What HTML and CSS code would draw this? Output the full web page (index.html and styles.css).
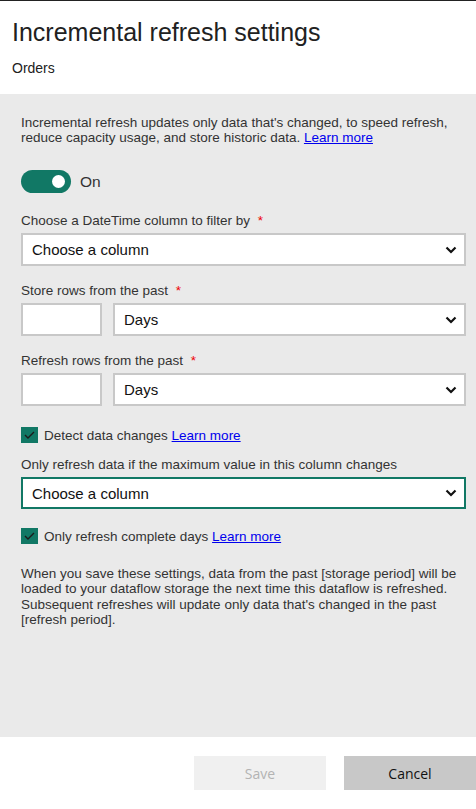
FILE: index.html
```html
<!DOCTYPE html>
<html>
<head>
	<meta charset="utf-8">
	<title>Incremental refresh settings</title>
	<link rel="stylesheet" href="styles.css">
</head>
<body>

<div class="dialog">
	<div class="header">
		<h1>Incremental refresh settings</h1>
		<p class="entity">Orders</p>
	</div>

	<div class="panel">
		<p class="desc">Incremental refresh updates only data that's changed, to speed refresh, reduce capacity usage, and store historic data. <a href="#">Learn more</a></p>

		<div class="toggle-row">
			<span class="toggle"><span class="knob"></span></span>
			<span class="toggle-label">On</span>
		</div>

		<label class="field-label first">Choose a DateTime column to filter by <span class="req">*</span></label>
		<div class="dropdown">
			<span>Choose a column</span>
			<svg class="chev" width="12" height="8" viewBox="0 0 12 8"><polyline points="1.5,1.5 6,6 10.5,1.5" fill="none" stroke="#111" stroke-width="2.2"/></svg>
		</div>

		<label class="field-label">Store rows from the past <span class="req">*</span></label>
		<div class="pair">
			<div class="num"></div>
			<div class="dropdown">
				<span>Days</span>
				<svg class="chev" width="12" height="8" viewBox="0 0 12 8"><polyline points="1.5,1.5 6,6 10.5,1.5" fill="none" stroke="#111" stroke-width="2.2"/></svg>
			</div>
		</div>

		<label class="field-label">Refresh rows from the past <span class="req">*</span></label>
		<div class="pair">
			<div class="num"></div>
			<div class="dropdown">
				<span>Days</span>
				<svg class="chev" width="12" height="8" viewBox="0 0 12 8"><polyline points="1.5,1.5 6,6 10.5,1.5" fill="none" stroke="#111" stroke-width="2.2"/></svg>
			</div>
		</div>

		<div class="check-row first">
			<span class="check"><svg width="17" height="16" viewBox="0 0 17 16"><polyline points="4,8 7,11 13,5" fill="none" stroke="#1b1b1b" stroke-width="1.4"/></svg></span>
			<span>Detect data changes <a href="#">Learn more</a></span>
		</div>

		<label class="field-label">Only refresh data if the maximum value in this column changes</label>
		<div class="dropdown focus">
			<span>Choose a column</span>
			<svg class="chev" width="12" height="8" viewBox="0 0 12 8"><polyline points="1.5,1.5 6,6 10.5,1.5" fill="none" stroke="#111" stroke-width="2.2"/></svg>
		</div>

		<div class="check-row">
			<span class="check"><svg width="17" height="16" viewBox="0 0 17 16"><polyline points="4,8 7,11 13,5" fill="none" stroke="#1b1b1b" stroke-width="1.4"/></svg></span>
			<span>Only refresh complete days <a href="#">Learn more</a></span>
		</div>

		<p class="note">When you save these settings, data from the past [storage period] will be loaded to your dataflow storage the next time this dataflow is refreshed. Subsequent refreshes will update only data that's changed in the past [refresh period].</p>
	</div>

	<div class="footer">
		<button class="btn save" disabled>Save</button>
		<button class="btn cancel">Cancel</button>
	</div>
</div>

</body>
</html>
```

FILE: styles.css
```css
body {
	margin: 0;
	background: white;
	font-family: "Liberation Sans", Arial, sans-serif;
	color: #333;
}
.dialog {
	width: 476px;
	height: 809px;
	display: flex;
	flex-direction: column;
	border-top: 1px solid #222;
	box-sizing: border-box;
}

.header {
	height: 93px;
	flex: none;
	padding: 0 12px;
	box-sizing: border-box;
}
.header h1 {
	margin: 0;
	padding-top: 17px;
	font-size: 25px;
	font-weight: normal;
	color: #212121;
	line-height: 28px;
}
.entity {
	margin: 14px 0 0 0;
	font-size: 14px;
	color: #212121;
}

.panel {
	height: 643px;
	flex: none;
	background: #eaeaea;
	padding: 0 10px 0 21px;
	box-sizing: border-box;
	display: flex;
	flex-direction: column;
	font-size: 13.5px;
	line-height: 15px;
}
.panel a {
	color: #0000ee;
}
.desc {
	margin: 21px 0 0 0;
}

.toggle-row {
	display: flex;
	align-items: center;
	margin-top: 25px;
	height: 23px;
}
.toggle {
	width: 50px;
	height: 23px;
	border-radius: 12px;
	background: #117865;
	position: relative;
}
.knob {
	position: absolute;
	right: 6px;
	top: 5px;
	width: 13px;
	height: 13px;
	border-radius: 50%;
	background: white;
}
.toggle-label {
	margin-left: 9px;
	font-size: 15.5px;
}

.field-label {
	display: block;
	margin-top: 17px;
	margin-bottom: 5px;
}
.field-label.first {
	margin-top: 20px;
}
.req {
	color: #e00;
	margin-left: 4px;
}

.dropdown {
	flex: none;
	height: 33px;
	background: white;
	border: 2px solid #c8c8c8;
	box-sizing: border-box;
	display: flex;
	align-items: center;
	justify-content: space-between;
	padding: 0 7px 0 9px;
	font-size: 15px;
	color: #111;
}
.pair .dropdown {
	flex: 1;
}
.dropdown.focus {
	border-color: #117865;
	height: 32px;
}
.pair {
	display: flex;
	gap: 11px;
}
.num {
	width: 81px;
	height: 33px;
	background: white;
	border: 2px solid #c8c8c8;
	box-sizing: border-box;
}

.check-row {
	display: flex;
	align-items: center;
	gap: 6px;
	margin-top: 19px;
}
.check-row.first {
	margin-top: 21px;
	margin-bottom: -3px;
}
.check {
	width: 17px;
	height: 16px;
	background: #117865;
	display: flex;
}

.note {
	margin: 22px 0 0 0;
	line-height: 15.3px;
}

.footer {
	flex: 1;
	display: flex;
	justify-content: flex-end;
	align-items: flex-start;
	padding-top: 19px;
	gap: 18px;
}
.btn {
	width: 132px;
	height: 34px;
	border: none;
	font-family: "Open Sans", "Noto Sans", sans-serif;
	font-size: 14px;
	padding: 0;
}
.btn.save {
	background: #f0f0f0;
	color: #b3b3b3;
}
.btn.cancel {
	background: #c8c8c8;
	color: #111;
}
```
